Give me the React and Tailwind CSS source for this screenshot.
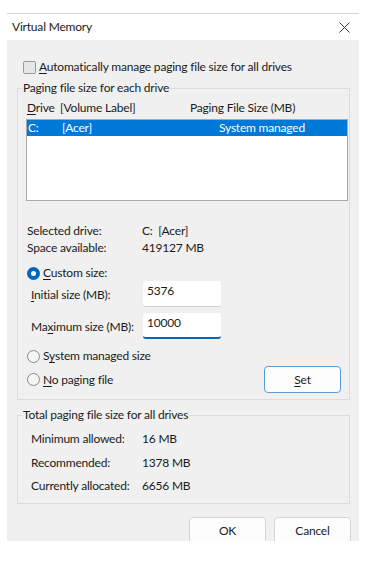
import React from "react";

const U = ({ children }) => <span className="underline underline-offset-2">{children}</span>;

const Radio = ({ checked }) =>
  checked ? (
    <span className="inline-block w-[13px] h-[13px] rounded-full border-[4px] border-[#0067c0] bg-white shrink-0" />
  ) : (
    <span className="inline-block w-[13px] h-[13px] rounded-full border border-[#8a8a8a] bg-[#f6f6f6] shrink-0" />
  );

const Group = ({ title, className, children }) => (
  <fieldset className={"border border-[#dcdcdc] " + className}>
    <legend className="ml-[4px] px-[1px] leading-[16px]">{title}</legend>
    {children}
  </fieldset>
);

const Button = ({ children, primary, className }) => (
  <button
    className={
      "w-[77px] h-[27px] rounded-[4px] bg-[#fdfdfd] text-center " +
      (primary ? "border border-[#5b9bd5] " : "border border-[#d4d4d4] ") +
      className
    }
  >
    {children}
  </button>
);

export default function App() {
  return (
    <div
      className="w-[366px] h-[563px] bg-white overflow-hidden text-[12px] tracking-[-0.2px] text-[#1b1b1b] whitespace-nowrap"
      style={{ fontFamily: 'Lato, "Noto Sans", sans-serif' }}
    >
      <div className="ml-[7px] mt-[13px] w-[352px] border-t border-[#d6d6d6]">
        {/* title bar */}
        <div className="h-[26px] flex items-center justify-between pl-[5px] pr-[9px]">
          <span className="leading-[16px]">Virtual Memory</span>
          <svg width="11" height="11" viewBox="0 0 11 11">
            <path d="M0.5 0.5L10.5 10.5M10.5 0.5L0.5 10.5" stroke="#333" strokeWidth="1" />
          </svg>
        </div>

        {/* body */}
        <div className="h-[501px] bg-[#f0f0f0] overflow-hidden pt-[19px]">
          <div className="flex items-center gap-[3px] pl-[16px] h-[16px]">
            <span className="inline-block w-[13px] h-[13px] rounded-[2px] border border-[#9a9a9a] bg-[#e6e6e6]" />
            <span className="leading-[16px]">
              <U>A</U>utomatically manage paging file size for all drives
            </span>
          </div>

          <Group title="Paging file size for each drive" className="ml-[10px] mt-[5px] w-[333px]">
            <div className="pl-[8px] pr-[1px] pb-[6px]">
              <div className="flex leading-[16px] mt-[4px] pl-[1px]">
                <span className="w-[33px]">
                  <U>D</U>rive
                </span>
                <span className="w-[130px]">[Volume Label]</span>
                <span>Paging File Size (MB)</span>
              </div>
              <div className="mt-[3px] h-[82px] border border-[#a8a8a8] bg-white">
                <div className="h-[16px] bg-[#0078d7] text-white flex items-center leading-[16px]">
                  <span className="w-[35px] pl-[1px]">C:</span>
                  <span className="w-[157px]">[Acer]</span>
                  <span>System managed</span>
                </div>
              </div>

              <div className="mt-[22px] pl-[1px] leading-[16px]">
                <div className="flex h-[17px]">
                  <span className="w-[115px]">Selected drive:</span>
                  <span>C:&nbsp; [Acer]</span>
                </div>
                <div className="flex h-[17px]">
                  <span className="w-[115px]">Space available:</span>
                  <span>419127 MB</span>
                </div>
              </div>

              <div className="mt-[8px] pl-[1px] flex items-center gap-[3px] h-[16px]">
                <Radio checked />
                <span>
                  <U>C</U>ustom size:
                </span>
              </div>

              <div className="flex items-center h-[26px] pl-[5px]">
                <span className="w-[112px] pt-[1px]">
                  <U>I</U>nitial size (MB):
                </span>
                <div className="w-[78px] h-[26px] bg-white border-b border-[#d0d0d0] rounded-[3px] pl-[4px] pt-[2px] leading-[16px]">
                  5376
                </div>
              </div>

              <div className="flex items-center h-[26px] pl-[5px] mt-[6px]">
                <span className="w-[112px] pt-[1px]">
                  Ma<U>x</U>imum size (MB):
                </span>
                <div className="w-[78px] h-[26px] bg-white border-b-2 border-[#0067c0] rounded-[3px] pl-[4px] pt-[2px] leading-[16px]">
                  10000
                </div>
              </div>

              <div className="mt-[9px] pl-[1px] flex items-center gap-[3px] h-[16px]">
                <Radio />
                <span>
                  S<U>y</U>stem managed size
                </span>
              </div>

              <div className="mt-[2px] flex items-center h-[27px] pl-[1px]">
                <Radio />
                <span className="ml-[3px]">
                  <U>N</U>o paging file
                </span>
                <Button primary className="ml-auto mr-[7px]">
                  <U>S</U>et
                </Button>
              </div>
            </div>
          </Group>

          <Group title="Total paging file size for all drives" className="ml-[10px] mt-[7px] w-[333px]">
            <div className="pl-[13px] pb-[9px] mt-[8px] leading-[16px]">
              <div className="flex">
                <span className="w-[111px]">Minimum allowed:</span>
                <span>16 MB</span>
              </div>
              <div className="flex mt-[8px]">
                <span className="w-[111px]">Recommended:</span>
                <span>1378 MB</span>
              </div>
              <div className="flex mt-[7px]">
                <span className="w-[111px]">Currently allocated:</span>
                <span>6656 MB</span>
              </div>
            </div>
          </Group>

          <div className="flex justify-end gap-[8px] pr-[8px] mt-[13px]">
            <Button>OK</Button>
            <Button>Cancel</Button>
          </div>
        </div>
      </div>
    </div>
  );
}
